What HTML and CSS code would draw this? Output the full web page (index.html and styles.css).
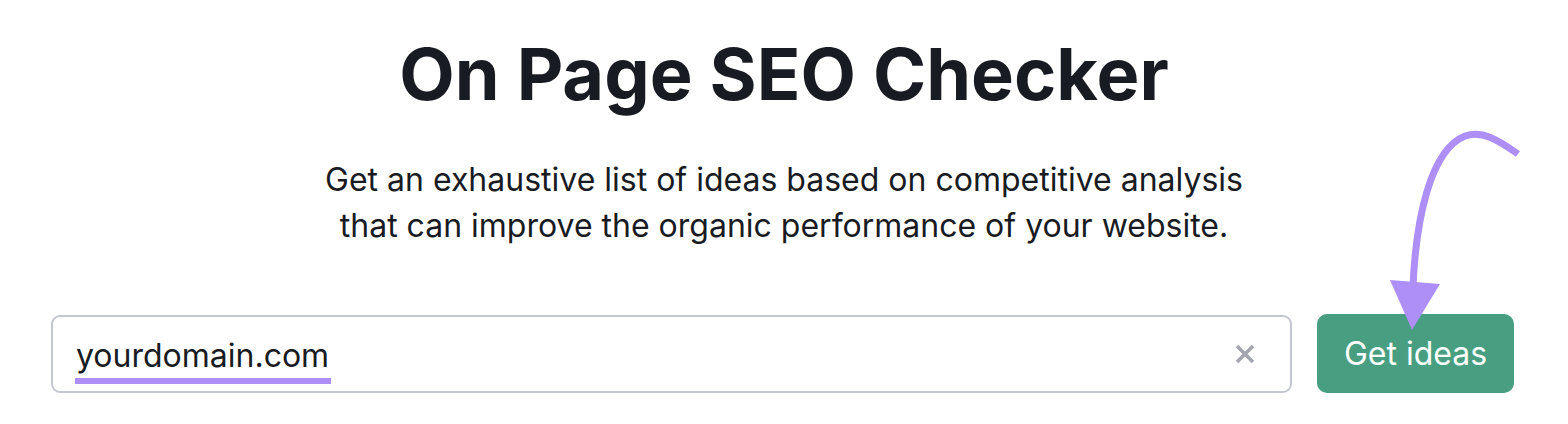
FILE: index.html
```html
<!DOCTYPE html>
<html lang="en">
<head>
<meta charset="utf-8">
<title>On Page SEO Checker</title>
<link rel="stylesheet" href="styles.css">
</head>
<body>
<main class="page">
  <h1 class="title">On Page SEO Checker</h1>
  <p class="subtitle">Get an exhaustive list of ideas based on competitive analysis<br>that can improve the organic performance of your website.</p>
  <div class="search">
    <div class="field">
      <span class="value">yourdomain.com</span>
      <svg class="clear" width="20" height="20" viewBox="0 0 20 20" aria-hidden="true">
        <path d="M2 2 L18 18 M18 2 L2 18" stroke="#a4a6ad" stroke-width="3.6" stroke-linecap="butt"/>
      </svg>
    </div>
    <button class="btn">Get ideas</button>
  </div>
  <svg class="arrow" width="1568" height="424" viewBox="0 0 1568 424" aria-hidden="true">
    <path d="M1518 154 C1498 140 1482 130 1465 136 C1430 150 1416 220 1413 286" fill="none" stroke="#ae8ff7" stroke-width="7"/>
    <path d="M1390 280 L1440 284 L1412 330 Z" fill="#ae8ff7"/>
  </svg>
</main>
</body>
</html>
```

FILE: styles.css
```css
html, body {
  margin: 0;
  padding: 0;
  background: #ffffff;
}

.page {
  position: relative;
  width: 1568px;
  height: 424px;
  font-family: Inter, "Noto Sans", sans-serif;
  color: #191b23;
  display: flex;
  flex-direction: column;
  align-items: center;
  overflow: hidden;
}

.title {
  margin: 30px 0 0;
  font-size: 72px;
  line-height: 88px;
  font-weight: 700;
  letter-spacing: 0;
}

.subtitle {
  margin: 39px 0 0;
  font-size: 32px;
  line-height: 46px;
  text-align: center;
  font-weight: 400;
}

.search {
  margin-top: 66px;
  display: flex;
  gap: 25px;
  align-self: stretch;
  padding: 0 54px 0 51px;
}

.field {
  flex: 1;
  height: 78px;
  box-sizing: border-box;
  border: 2px solid #c4c7cf;
  border-radius: 9px;
  display: flex;
  align-items: center;
  justify-content: space-between;
  padding: 0 35px 0 22px;
}

.value {
  font-size: 32px;
  color: #191b23;
  border-bottom: 6px solid #ae8ff7;
  padding: 0 2px 3px 1px;
  line-height: 38px;
  margin-top: 12px;
}

.clear {
  display: block;
}

.btn {
  width: 197px;
  height: 79px;
  margin-top: -1px;
  border: 0;
  border-radius: 10px;
  background: #479e80;
  color: #ffffff;
  font-family: Inter, "Noto Sans", sans-serif;
  font-size: 32px;
  font-weight: 400;
  padding: 0;
}

.arrow {
  position: absolute;
  left: 0;
  top: 0;
  pointer-events: none;
}
```
